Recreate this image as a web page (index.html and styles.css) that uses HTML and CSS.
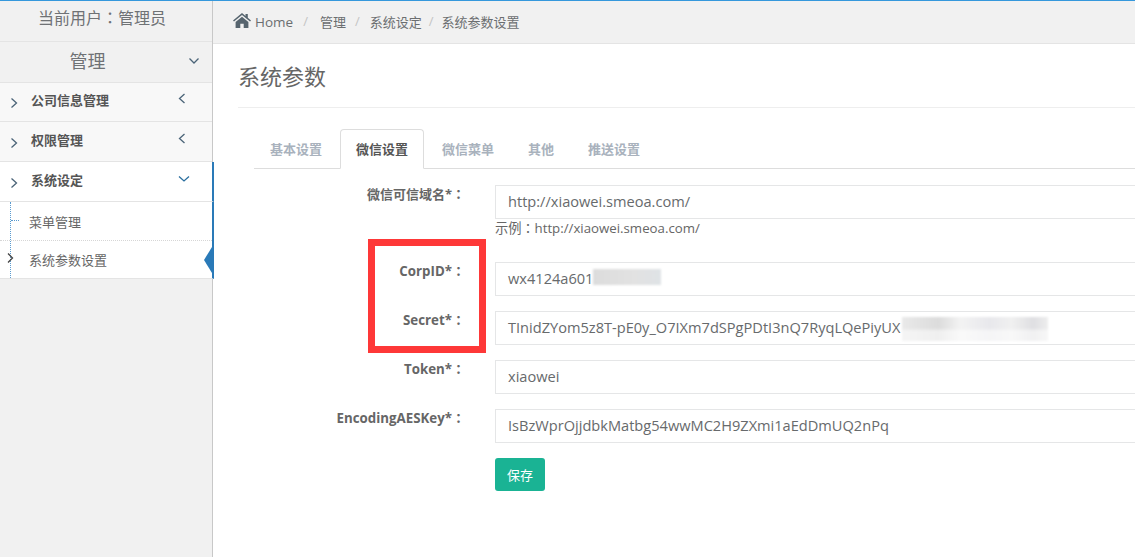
FILE: index.html
```html
<!DOCTYPE html>
<html lang="zh">
<head>
<meta charset="utf-8">
<title>系统参数</title>
<link rel="stylesheet" href="styles.css">
</head>
<body>
<div class="page">
  <aside class="sidebar">
    <div class="user">当前用户<span class="colon" lang="zh-Hant">：</span>管理员</div>
    <div class="group"><span>管理</span>
      <svg class="chev group-chev" width="12" height="8" viewBox="0 0 12 8"><path d="M1.5 1.5 6 6l4.500-4.500"/></svg>
    </div>
    <div class="item item-first">
      <svg class="chev lead" width="8" height="12" viewBox="0 0 8 12"><path d="M1.500 1.500 6.500 6l-5 4.500"/></svg>
      <span class="item-label">公司信息管理</span>
      <svg class="chev trail" width="8" height="12" viewBox="0 0 8 12"><path d="M6.500 1 1.500 5.500l5 4.500"/></svg>
    </div>
    <div class="item">
      <svg class="chev lead" width="8" height="12" viewBox="0 0 8 12"><path d="M1.500 1.500 6.500 6l-5 4.500"/></svg>
      <span class="item-label">权限管理</span>
      <svg class="chev trail" width="8" height="12" viewBox="0 0 8 12"><path d="M6.500 1 1.500 5.500l5 4.500"/></svg>
    </div>
    <div class="item item-open">
      <svg class="chev lead" width="8" height="12" viewBox="0 0 8 12"><path d="M1.500 1.500 6.500 6l-5 4.500"/></svg>
      <span class="item-label">系统设定</span>
      <svg class="chev trail-open" width="12" height="8" viewBox="0 0 12 8"><path d="M1 1.500 6 6l5-4.500"/></svg>
    </div>
    <div class="submenu">
      <div class="sub sub-first"><span class="tick"></span>菜单管理</div>
      <div class="sub sub-active">
        <svg class="chev sub-chev" width="7" height="12" viewBox="0 0 7 12"><path d="M1 1.500 5.500 6 1 10.500"/></svg>
        系统参数设置<span class="pointer"></span>
      </div>
    </div>
  </aside>
  <main class="main">
    <nav class="crumbs">
      <svg class="home" width="18" height="15" viewBox="0 0 18 15"><path d="M9 0 0 7.400l1 1.200L9 2l8 6.600 1-1.200-3.200-2.600V1h-2.300v1.900zM2.600 9v6h4.700v-4.200h3.400V15h4.700V9L9 3.700z"/></svg>
      <span class="crumb-home">Home</span><i class="sep sep-a">/</i>
      <span>管理</span><i class="sep sep-b">/</i>
      <span>系统设定</span><i class="sep sep-c">/</i>
      <span>系统参数设置</span>
    </nav>
    <section class="content">
      <h3 class="title">系统参数</h3>
      <ul class="tabs">
        <li class="tab">基本设置</li>
        <li class="tab active">微信设置</li>
        <li class="tab">微信菜单</li>
        <li class="tab">其他</li>
        <li class="tab">推送设置</li>
      </ul>
      <form class="form">
        <div class="row row-help">
          <label class="label"><span class="cjk">微信可信域名*</span><span class="colon" lang="zh-Hant">：</span></label>
          <div class="field">
            <div class="input">http://xiaowei.smeoa.com/</div>
            <div class="help">示例<span class="colon" lang="zh-Hant">：</span>http://xiaowei.smeoa.com/</div>
          </div>
        </div>
        <div class="row">
          <label class="label">CorpID*<span class="colon" lang="zh-Hant">：</span></label>
          <div class="field"><div class="input">wx4124a601<span class="blur blur-corp"></span></div></div>
        </div>
        <div class="row">
          <label class="label">Secret*<span class="colon" lang="zh-Hant">：</span></label>
          <div class="field"><div class="input">TInidZYom5z8T-pE0y_O7IXm7dSPgPDtI3nQ7RyqLQePiyUX<span class="blur blur-secret"></span></div></div>
        </div>
        <div class="row">
          <label class="label">Token*<span class="colon" lang="zh-Hant">：</span></label>
          <div class="field"><div class="input">xiaowei</div></div>
        </div>
        <div class="row">
          <label class="label">EncodingAESKey*<span class="colon" lang="zh-Hant">：</span></label>
          <div class="field"><div class="input">IsBzWprOjjdbkMatbg54wwMC2H9ZXmi1aEdDmUQ2nPq</div></div>
        </div>
        <div class="row row-actions">
          <span class="label"></span>
          <div class="field"><button class="save" type="button">保存</button></div>
        </div>
      </form>
    </section>
  </main>
</div>
<div class="annotation"></div>
</body>
</html>
```
FILE: styles.css
```css
* { box-sizing: border-box; }
html, body { margin: 0; height: 100%; overflow: hidden; background: #fff; }
body {
  font-family: "Open Sans", "Noto Sans CJK SC", sans-serif;
  font-size: 13px;
  color: #676a6c;
  border-top: 1px solid #3598dc;
  position: relative;
}
.page { display: flex; height: 100%; }
.colon { font-family: "Noto Sans CJK TC", sans-serif; font-size: 13px; line-height: 1; }

.sidebar {
  width: 213px;
  flex: none;
  background: #f1f1f1;
  border-right: 1px solid #c8c8c8;
}
.chev { fill: none; stroke: #4b6478; stroke-width: 1.3; display: block; flex: none; }
.user {
  height: 41px;
  border-bottom: 1px solid #e4e4e4;
  text-align: center;
  font-size: 16px;
  line-height: 35px;
  color: #6f7275;
  padding-right: 8px;
}
.user .colon { font-size: 16px; }
.group {
  height: 41px;
  border-bottom: 1px solid #e4e4e4;
  display: flex;
  align-items: center;
  padding: 0 12px 4px 0;
  font-size: 18px;
  color: #6f7275;
}
.group span { flex: 1; text-align: center; margin-right: 15px; margin-left: 2px; }
.group-chev { margin-top: 1px; }
.item {
  height: 40px;
  background: #f8f8f8;
  border-bottom: 1px solid #e4e4e4;
  display: flex;
  align-items: center;
  padding: 0 0 4px 10px;
  font-weight: 700;
  font-size: 13px;
  color: #555;
}
.item-first { height: 39px; padding-bottom: 5px; }
.item-label { flex: 1; margin-left: 13px; }
.trail { margin-right: 26px; margin-top: -1px; }
.lead { margin-top: 6px; }
.item-open {
  background: #fff;
  margin-right: -2px;
  border-right: 2px solid #2a7ab8;
}
.trail-open { margin-right: 22px; margin-top: -1px; stroke: #2a6f9f; }
.submenu {
  background: #fff;
  margin-right: -2px;
  border-right: 2px solid #2a7ab8;
  border-bottom: 1px solid #e4e4e4;
  position: relative;
  font-size: 13px;
  color: #666;
}
.submenu::before {
  content: "";
  position: absolute;
  left: 10px;
  top: 0;
  bottom: 0;
  border-left: 1px dotted #5a9bd0;
}
.sub {
  display: flex;
  align-items: center;
  padding-left: 29px;
  position: relative;
}
.sub-first { height: 39px; border-bottom: 1px dotted #d6d6d6; }
.sub-active { height: 37px; }
.tick {
  position: absolute;
  left: 11px;
  top: 18px;
  width: 8px;
  border-top: 1px dotted #5a9bd0;
}
.sub-chev {
  position: absolute;
  left: 7px;
  top: 11px;
  stroke: #444;
}
.pointer {
  position: absolute;
  right: 0;
  top: 6px;
  width: 8px;
  height: 26px;
  background: #2a7ab8;
  clip-path: polygon(100% 0, 0 50%, 100% 100%);
}

.main { flex: 1; min-width: 0; display: flex; flex-direction: column; }
.crumbs {
  height: 43px;
  flex: none;
  background: #f1f1f1;
  border-bottom: 1px solid #e4e4e4;
  display: flex;
  align-items: center;
  padding: 0 0 2px 20px;
  font-size: 13px;
  color: #6b6e70;
}
.home { fill: #56646e; margin-right: 4px; margin-top: -2px; }
.crumb-home { font-size: 13.500px; padding-top: 2px; }
.sep { font-style: normal; color: #c4c4c4; font-size: 13px; }
.sep-a { margin: 0 12px 0 10px; }
.sep-b { margin: 0 10px 0 9px; }
.sep-c { margin: 0 8px 0 7px; }

.content { padding: 0 0 0 25px; }
.title {
  margin: 0;
  height: 64px;
  border-bottom: 1px solid #eee;
  font-size: 22px;
  font-weight: 400;
  line-height: 64px;
  color: #666;
}
.tabs {
  list-style: none;
  margin: 21px 0 0 16px;
  padding: 0;
  height: 40px;
  display: flex;
  gap: 2px;
  border-bottom: 1px solid #ddd;
  font-weight: 700;
  font-size: 13px;
  color: #a9b2bd;
}
.tab { padding: 0 16px; height: 40px; line-height: 41px; }
.tab.active {
  background: #fff;
  color: #555;
  border: 1px solid #ddd;
  border-bottom-color: #fff;
  border-radius: 4px 4px 0 0;
  line-height: 39px;
  padding: 0 15px;
}
.form { margin-top: 16px; }
.row { display: flex; margin-bottom: 15px; }
.row-actions { margin-bottom: 0; }
.label {
  width: 229px;
  margin-left: -2px;
  flex: none;
  text-align: right;
  height: 18px;
  font-weight: 700;
  font-size: 13.300px;
  line-height: 18px;
  color: #666;
}
.cjk { font-size: 13px; }
.field { flex: 1; min-width: 0; margin-left: 30px; margin-right: -20px; }
.input {
  height: 34px;
  border: 1px solid #e5e6e7;
  padding: 0 12px;
  font-size: 14.600px;
  line-height: 30px;
  color: #676a6c;
  white-space: nowrap;
  position: relative;
}
.help { font-size: 13.250px; height: 19px; line-height: 17px; margin-top: 1px; margin-bottom: 8px; color: #666; }
.blur { position: absolute; filter: blur(1px); }
.blur-corp {
  left: 97px;
  width: 68px;
  height: 16px;
  top: 6px;
  background: linear-gradient(90deg, #dcdcdc, #e2e2e2 60%, #dfe3e6);
}
.blur-secret {
  left: 406px;
  width: 146px;
  top: 5px;
  height: 24px;
  background:
    linear-gradient(180deg, rgba(255,255,255,0) 45%, rgba(255,255,255,.55) 60%),
    linear-gradient(90deg, #e9e9e9, #dcdcdc 25%, #f3f3f3 40%, #e8e8ec 60%, #f0f0f0 75%, #dfdfe2 90%, #eee);
}
.save {
  width: 50px;
  height: 33px;
  background: #1ab394;
  border: none;
  border-radius: 3px;
  color: #fff;
  font: 13px "Open Sans", "Noto Sans CJK SC", sans-serif;
  padding: 0;
}
.annotation {
  position: absolute;
  left: 368px;
  top: 238px;
  width: 118px;
  height: 114px;
  border: 7px solid #fe3838;
  pointer-events: none;
}
```
